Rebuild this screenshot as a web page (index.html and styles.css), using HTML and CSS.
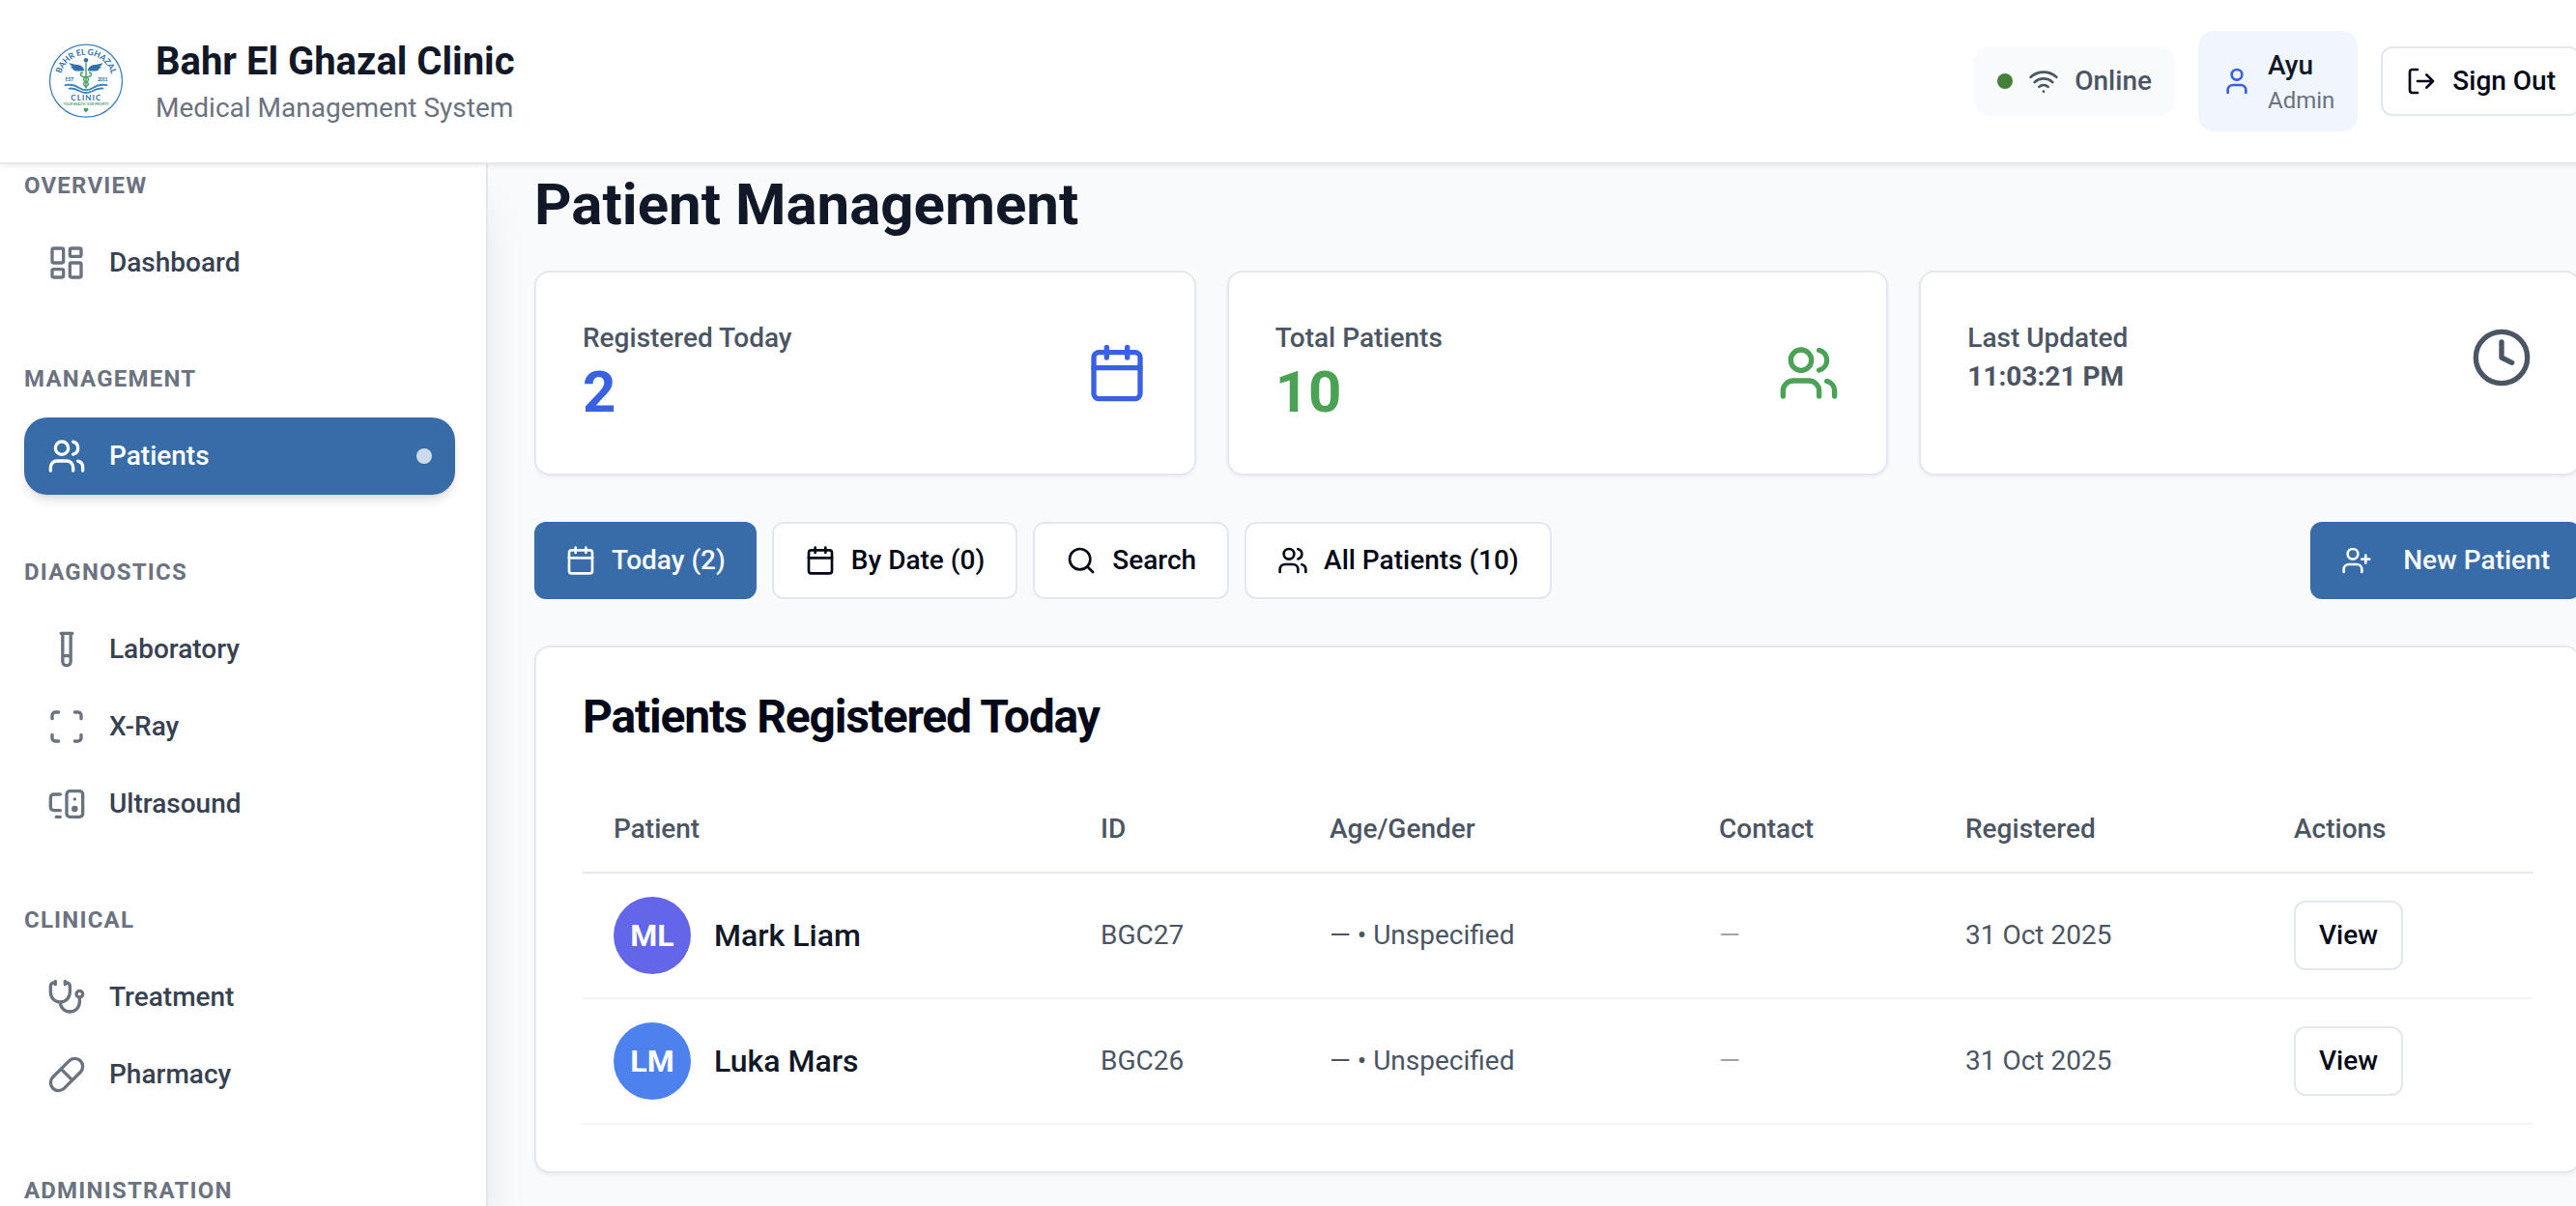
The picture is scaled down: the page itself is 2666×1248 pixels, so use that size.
FILE: index.html
```
<!DOCTYPE html>
<html lang="en">
<head>
<meta charset="utf-8">
<title>Bahr El Ghazal Clinic</title>
<link rel="stylesheet" href="styles.css">
</head>
<body>
<svg class="sprite" aria-hidden="true">
  <symbol id="calendar" viewBox="0 0 24 24"><path d="M8 2v4M16 2v4"/><rect x="3" y="4" width="18" height="18" rx="2"/><path d="M3 10h18"/></symbol>
  <symbol id="users" viewBox="0 0 24 24"><path d="M16 21v-2a4 4 0 0 0-4-4H6a4 4 0 0 0-4 4v2"/><circle cx="9" cy="7" r="4"/><path d="M22 21v-2a4 4 0 0 0-3-3.87M16 3.13a4 4 0 0 1 0 7.75"/></symbol>
</svg>

<div class="app">
<header class="topbar">
  <div class="brand">
    <svg class="logo" viewBox="0 0 80 80">
      <defs>
        <path id="arc" d="M14 39.700A27 27 0 0 1 68 39.700"/>
        <path id="wing" d="M-1.500 29.300C-2.500 25-5.500 23.300-9 22.900c-3.200-.3-6-.6-8.400-1.900.8 2.200 2 3.300 4 3.800l-2.600-.1c.8 1.700 2.200 2.500 4.200 2.700l-2.200.2c1.300 1.500 3.200 2.100 5.600 2 2.600 0 4.600-.5 6.900-.3z"/>
      </defs>
      <circle cx="41" cy="39.700" r="37.500" fill="#fff" stroke="#3f80bb" stroke-width="1.300"/>
      <text class="logo-blue" font-size="8.600"><textPath href="#arc" startOffset="7.500" textLength="70">BAHR EL GHAZAL</textPath></text>
      <g fill="#2f70ad" transform="translate(41 0)">
        <circle cy="18.300" r="2.200"/>
        <use href="#wing"/>
        <use href="#wing" transform="scale(-1 1)"/>
      </g>
      <g fill="none" stroke="#45a069" stroke-width="1.400" stroke-linecap="round" transform="translate(41 0)">
        <path d="M0 21v26"/>
        <path d="M-3.500 31c-3 .5-2.500 3.800 0 4.200 3 .6 6.500 1 6 3.600-.5 2.400-5 2-5 4.200 0 1.500 2 1.500 2 3"/>
        <path d="M3.500 31c3 .5 2.500 3.800 0 4.200-3 .6-6.500 1-6 3.600.5 2.400 5 2 5 4.200 0 1.500-2 1.500-2 3"/>
      </g>
      <g fill="none" stroke="#3f86c0" stroke-width="1.800" stroke-linecap="round">
        <path d="M19.500 44.200c7-1.400 11 .4 14.500 2.800 4 2.700 10 2.700 14 0 3.500-2.400 7.500-4.200 14.500-2.800"/>
        <path d="M23.500 47.600c5-.6 8 .8 11 2.600 4 2.200 9 2.200 13 0 3-1.800 6-3.200 11-2.600"/>
      </g>
      <text class="logo-blue" x="24" y="39.700" font-size="5.200" text-anchor="middle">EST</text>
      <text class="logo-blue" x="58.200" y="39.700" font-size="5.200" text-anchor="middle" textLength="10.500">2011</text>
      <text class="logo-blue" x="25.300" y="59.700" font-size="7.900" textLength="31">CLINIC</text>
      <text class="logo-green" x="17.500" y="65" font-size="3.900" textLength="47.500" lengthAdjust="spacingAndGlyphs">YOUR HEALTH, OUR PRIORITY</text>
      <path fill="#45a069" d="M41 72.300c-2.200-1.700-2.600-2.700-2.400-3.600.3-1.200 1.800-1.300 2.400-.2.600-1.100 2.100-1 2.400.2.200.9-.2 1.900-2.400 3.600z"/>
    </svg>
    <div>
      <div class="brand-name">Bahr El Ghazal Clinic</div>
      <div class="brand-sub">Medical Management System</div>
    </div>
  </div>
  <div class="top-actions">
    <div class="status">
      <span class="status-dot"></span>
      <svg class="icon" viewBox="0 0 24 24"><path d="M12 20h.01M2 8.820a15 15 0 0 1 20 0M5 12.859a10 10 0 0 1 14 0M8.500 16.429a5 5 0 0 1 7 0"/></svg>
      <span>Online</span>
    </div>
    <div class="user">
      <svg class="icon" viewBox="0 0 24 24"><path d="M19 21v-2a4 4 0 0 0-4-4H9a4 4 0 0 0-4 4v2"/><circle cx="12" cy="7" r="4"/></svg>
      <div><div class="user-name">Ayu</div><div class="user-role">Admin</div></div>
    </div>
    <button class="btn btn-small">
      <svg class="icon" viewBox="0 0 24 24"><path d="M9 21H5a2 2 0 0 1-2-2V5a2 2 0 0 1 2-2h4M16 17l5-5-5-5M21 12H9"/></svg>Sign Out
    </button>
  </div>
</header>

<div class="body">
<aside class="sidebar">
  <section class="nav-group">
    <h2>OVERVIEW</h2>
    <a class="nav-item"><svg class="icon" viewBox="0 0 24 24"><rect x="3" y="3" width="7" height="9" rx="1"/><rect x="14" y="3" width="7" height="5" rx="1"/><rect x="14" y="12" width="7" height="9" rx="1"/><rect x="3" y="16" width="7" height="5" rx="1"/></svg>Dashboard</a>
  </section>
  <section class="nav-group">
    <h2>MANAGEMENT</h2>
    <a class="nav-item active"><svg class="icon"><use href="#users"/></svg>Patients<span class="nav-dot"></span></a>
  </section>
  <section class="nav-group">
    <h2>DIAGNOSTICS</h2>
    <a class="nav-item"><svg class="icon" viewBox="0 0 24 24"><path d="M14.500 2v17.500c0 1.400-1.100 2.500-2.500 2.500s-2.500-1.100-2.500-2.500V2M8.500 2h7M14.500 16h-5"/></svg>Laboratory</a>
    <a class="nav-item"><svg class="icon" viewBox="0 0 24 24"><path d="M3 7V5a2 2 0 0 1 2-2h2M17 3h2a2 2 0 0 1 2 2v2M21 17v2a2 2 0 0 1-2 2h-2M7 21H5a2 2 0 0 1-2-2v-2"/></svg>X-Ray</a>
    <a class="nav-item"><svg class="icon" viewBox="0 0 24 24"><path d="M5.500 20H8M17 9h.01"/><rect x="12" y="4" width="10" height="16" rx="2"/><path d="M8 6H4a2 2 0 0 0-2 2v6a2 2 0 0 0 2 2h4"/><circle cx="17" cy="15" r="1"/></svg>Ultrasound</a>
  </section>
  <section class="nav-group">
    <h2>CLINICAL</h2>
    <a class="nav-item"><svg class="icon" viewBox="0 0 24 24"><path d="M11 2v2M5 2v2M5 3H4a2 2 0 0 0-2 2v4a6 6 0 0 0 12 0V5a2 2 0 0 0-2-2h-1M8 15a6 6 0 0 0 12 0v-3"/><circle cx="20" cy="10" r="2"/></svg>Treatment</a>
    <a class="nav-item"><svg class="icon" viewBox="0 0 24 24"><path d="m10.500 20.500 10-10a4.950 4.950 0 1 0-7-7l-10 10a4.950 4.950 0 1 0 7 7ZM8.500 8.500l7 7"/></svg>Pharmacy</a>
  </section>
  <section class="nav-group">
    <h2>ADMINISTRATION</h2>
  </section>
</aside>

<main class="main">
  <h1>Patient Management</h1>

  <div class="stats">
    <div class="card stat">
      <div><div class="stat-label">Registered Today</div><div class="stat-value blue">2</div></div>
      <svg class="icon blue"><use href="#calendar"/></svg>
    </div>
    <div class="card stat">
      <div><div class="stat-label">Total Patients</div><div class="stat-value green">10</div></div>
      <svg class="icon green"><use href="#users"/></svg>
    </div>
    <div class="card stat">
      <div><div class="stat-label">Last Updated</div><div class="stat-time">11:03:21 PM</div></div>
      <svg class="icon" viewBox="0 0 24 24"><circle cx="12" cy="12" r="10"/><path d="M12 6v6l4 2"/></svg>
    </div>
  </div>

  <div class="toolbar">
    <button class="btn primary"><svg class="icon"><use href="#calendar"/></svg>Today (2)</button>
    <button class="btn"><svg class="icon"><use href="#calendar"/></svg>By Date (0)</button>
    <button class="btn"><svg class="icon" viewBox="0 0 24 24"><circle cx="11" cy="11" r="8"/><path d="m21 21-4.300-4.300"/></svg>Search</button>
    <button class="btn"><svg class="icon"><use href="#users"/></svg>All Patients (10)</button>
    <button class="btn primary new-patient"><svg class="icon" viewBox="0 0 24 24"><path d="M16 21v-2a4 4 0 0 0-4-4H6a4 4 0 0 0-4 4v2"/><circle cx="9" cy="7" r="4"/><path d="M19 8v6M22 11h-6"/></svg>New Patient</button>
  </div>

  <div class="card list">
    <h3>Patients Registered Today</h3>
    <table>
      <colgroup><col class="c-patient"><col class="c-id"><col class="c-age"><col class="c-contact"><col class="c-reg"><col></colgroup>
      <thead><tr><th>Patient</th><th>ID</th><th>Age/Gender</th><th>Contact</th><th>Registered</th><th>Actions</th></tr></thead>
      <tbody>
        <tr>
          <td><div class="person"><span class="avatar indigo">ML</span>Mark Liam</div></td>
          <td>BGC27</td><td>— • Unspecified</td><td class="muted">—</td><td>31 Oct 2025</td>
          <td><button class="btn btn-small">View</button></td>
        </tr>
        <tr>
          <td><div class="person"><span class="avatar sky">LM</span>Luka Mars</div></td>
          <td>BGC26</td><td>— • Unspecified</td><td class="muted">—</td><td>31 Oct 2025</td>
          <td><button class="btn btn-small">View</button></td>
        </tr>
      </tbody>
    </table>
  </div>
</main>
</div>
</div>
</body>
</html>
```
FILE: styles.css
```
* { box-sizing: border-box; margin: 0; }

body {
  height: 1248px;
  overflow: hidden;
  font: 400 28px/40px Roboto, sans-serif;
  color: #4b5563;
  background: #f9fafc;
}

/* The layout is slightly wider than the window, so its right edge is cut off */
.app { width: 2719px; height: 1248px; display: flex; flex-direction: column; overflow: hidden; }

.sprite { display: none; }

.icon {
  width: 32px;
  height: 32px;
  flex: none;
  display: block;
  fill: none;
  stroke: currentColor;
  stroke-width: 2;
  stroke-linecap: round;
  stroke-linejoin: round;
}

/* Top bar */
.topbar {
  position: relative;
  z-index: 2;
  flex: none;
  height: 170px;
  padding: 0 48px;
  display: flex;
  align-items: center;
  justify-content: space-between;
  background: #fff;
  border-bottom: 2px solid #e5e7eb;
  box-shadow: 0 2px 6px rgba(0, 0, 0, .07);
}
.brand { display: flex; align-items: center; gap: 32px; }
.logo { width: 80px; height: 80px; margin-right: 1px; }
.logo text { font-family: Lato, sans-serif; font-weight: 700; }
.logo-blue { fill: #2f70ad; }
.logo-green { fill: #45a069; }
.brand-name { font-size: 40px; line-height: 56px; font-weight: 700; color: #111827; }
.brand-sub { color: #6b7280; }

.top-actions { display: flex; align-items: center; gap: 24px; }
.status, .user { display: flex; align-items: center; gap: 16px; padding: 16px 24px; border-radius: 16px; }
.status { background: #f9fafb; font-weight: 500; }
.status-dot { width: 16px; height: 16px; border-radius: 50%; background: #45803a; }
.user { background: #f0f5fe; }
.user .icon { color: #3861e3; }
.user-name { font-weight: 500; color: #111827; }
.user-role { font-size: 24px; line-height: 32px; color: #6b7280; }

.btn {
  height: 80px;
  padding: 0 32px;
  display: flex;
  align-items: center;
  gap: 16px;
  font: 500 28px/40px Roboto, sans-serif;
  white-space: nowrap;
  color: #020817;
  background: #fff;
  border: 2px solid #e2e8f0;
  border-radius: 12px;
}
.btn.primary { color: #f8fafc; background: #386ca8; border: 0; }
.btn-small { height: 72px; padding: 0 24px; }

/* Sidebar */
.body { flex: 1; min-height: 0; display: flex; }
.sidebar {
  position: relative;
  z-index: 1;
  width: 505px;
  flex: none;
  padding: 6px 32px 0 25px;
  background: #fff;
  border-right: 2px solid #e5e7eb;
  box-shadow: 0 40px 50px -10px rgba(0, 0, 0, .1), 0 16px 20px -12px rgba(0, 0, 0, .1);
}
.nav-group { margin-bottom: 64px; }
.nav-group h2 { margin-bottom: 24px; font-size: 24px; line-height: 32px; font-weight: 700; letter-spacing: 1.2px; color: #6b7280; }
.nav-item { height: 80px; padding: 0 24px; display: flex; align-items: center; gap: 24px; border-radius: 24px; font-weight: 500; color: #374151; }
.nav-item .icon { width: 40px; height: 40px; color: #6b7280; }
.nav-item.active { color: #fff; background: #386ca8; box-shadow: 0 8px 12px -2px rgba(0, 0, 0, .1), 0 4px 8px -4px rgba(0, 0, 0, .1); }
.nav-item.active .icon { color: #fff; }
.nav-dot { width: 16px; height: 16px; margin-left: auto; border-radius: 50%; background: rgba(255, 255, 255, .75); }

/* Content */
.main { flex: 1; padding: 6px 48px 0; }
h1 { margin-bottom: 32px; font-size: 60px; line-height: 72px; font-weight: 700; color: #111827; }

.card { background: #fff; border: 2px solid #e2e8f0; border-radius: 16px; box-shadow: 0 2px 4px rgba(0, 0, 0, .05); }
.stats { display: grid; grid-template-columns: repeat(3, 1fr); gap: 32px; }
.stat { height: 212px; padding: 48px; display: flex; align-items: center; justify-content: space-between; align-content: flex-start; flex-wrap: wrap; }
.stat .icon { width: 64px; height: 64px; }
.stat-label { font-weight: 500; }
.stat-value { font-size: 60px; line-height: 72px; font-weight: 700; }
.stat-time { font-weight: 700; }
.blue { color: #3861e3; }
.green { color: #4ba154; }

.toolbar { margin: 48px 0; display: flex; gap: 16px; }
.new-patient { margin-left: auto; gap: 32px; }

.list { padding: 48px; }
.list h3 { margin-bottom: 48px; font-size: 48px; line-height: 48px; font-weight: 700; letter-spacing: -1.2px; color: #020817; }
table { width: 100%; table-layout: fixed; border-collapse: separate; border-spacing: 0; }
.c-patient { width: 504px; }
.c-id { width: 237px; }
.c-age { width: 403px; }
.c-contact { width: 255px; }
.c-reg { width: 340px; }
th { padding: 24px 32px; text-align: left; font-weight: 500; border-bottom: 2px solid #e5e7eb; }
td { padding: 24px 32px; border-bottom: 2px solid #f3f4f6; }
.person { display: flex; align-items: center; gap: 24px; font-size: 32px; font-weight: 500; color: #111827; }
.avatar { width: 80px; height: 80px; display: grid; place-items: center; border-radius: 50%; font-weight: 700; color: #fff; }
.indigo { background: #6366e8; }
.sky { background: #4d82ee; }
td .btn { margin: -16px 0; }
.muted { color: #9ca3af; }
```
